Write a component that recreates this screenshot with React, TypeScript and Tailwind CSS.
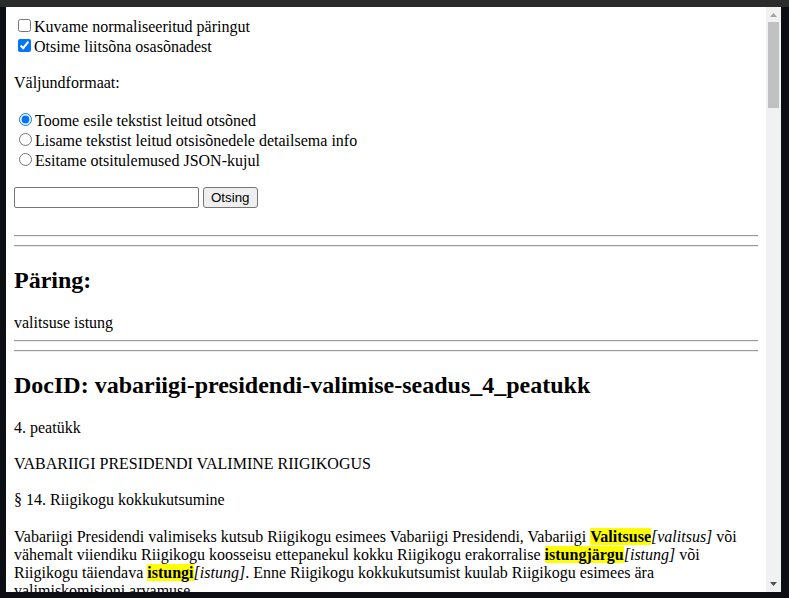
export default function App() {
  return (
    <div className="w-[789px] h-[598px] bg-[#0b0e13] overflow-hidden flex flex-col">
      <div className="h-[7px] bg-[#2b2b2b] shrink-0" />
      <div className="flex h-[585px] shrink-0">
        <div className="w-[6px] shrink-0" />
        <div className="w-[775px] h-[585px] bg-white flex shrink-0">
          <div className="w-[760px] h-full overflow-hidden px-2 pt-[9px] font-['Liberation_Serif',serif] text-[16px] leading-[normal] text-black">
            <form>
              <div>
                <input type="checkbox" className="m-[3px_3px_3px_4px] align-baseline" />
                Kuvame normaliseeritud päringut
              </div>
              <div>
                <input type="checkbox" defaultChecked className="m-[3px_3px_3px_4px] align-baseline" />
                Otsime liitsõna osasõnadest
              </div>
              <p className="mt-[18px] mb-[18px]">Väljundformaat:</p>
              <div>
                <input type="radio" name="fmt" defaultChecked className="m-[3px_3px_0px_5px] align-baseline" />
                Toome esile tekstist leitud otsõned
              </div>
              <div>
                <input type="radio" name="fmt" className="m-[3px_3px_0px_5px] align-baseline" />
                Lisame tekstist leitud otsisõnedele detailsema info
              </div>
              <div>
                <input type="radio" name="fmt" className="m-[3px_3px_0px_5px] align-baseline" />
                Esitame otsitulemused JSON-kujul
              </div>
              <div className="h-[17px]" />
              <div className="flex items-start gap-[4px]">
                <input
                  type="text"
                  className="w-[185px] h-[21px] border border-[#767676] rounded-[2px] bg-white px-[2px] text-[13.33px] font-['Liberation_Sans',sans-serif]"
                />
                <button
                  type="button"
                  className="h-[21px] px-[7px] border border-[#767676] rounded-[3px] bg-[#efefef] text-[13.33px] leading-none font-['Liberation_Sans',sans-serif]"
                >
                  Otsing
                </button>
              </div>
            </form>
            <hr className="mt-[27px] mb-2 h-[2px] border-t border-t-[#9a9a9a] border-b border-b-[#eeeeee]" />
            <hr className="my-2 h-[2px] border-t border-t-[#9a9a9a] border-b border-b-[#eeeeee]" />
            <h2 className="my-[19.92px] text-[24px] font-bold leading-[normal]">Päring:</h2>
            <div>valitsuse istung</div>
            <hr className="my-2 h-[2px] border-t border-t-[#9a9a9a] border-b border-b-[#eeeeee]" />
            <hr className="my-2 h-[2px] border-t border-t-[#9a9a9a] border-b border-b-[#eeeeee]" />
            <h2 className="my-[19.92px] text-[24px] font-bold leading-[normal]">
              DocID: vabariigi-presidendi-valimise-seadus_4_peatukk
            </h2>
            <p className="my-[18.4px]">4. peatükk</p>
            <p className="my-[18.4px]">VABARIIGI PRESIDENDI VALIMINE RIIGIKOGUS</p>
            <p className="my-[18.4px]">§ 14. Riigikogu kokkukutsumine</p>
            <p className="my-[18.4px]">
              Vabariigi Presidendi valimiseks kutsub Riigikogu esimees Vabariigi Presidendi, Vabariigi{" "}
              <b className="bg-[#ffff00]">Valitsuse</b>
              <i>[valitsus]</i> või vähemalt viiendiku Riigikogu koosseisu ettepanekul kokku Riigikogu
              erakorralise <b className="bg-[#ffff00]">istungjärgu</b>
              <i>[istung]</i> või Riigikogu täiendava <b className="bg-[#ffff00]">istungi</b>
              <i>[istung]</i>. Enne Riigikogu kokkukutsumist kuulab Riigikogu esimees ära
              valimiskomisjoni arvamuse.
            </p>
          </div>
          <div className="w-[15px] h-full bg-[#f1f1f1] flex flex-col items-center shrink-0">
            <svg width="15" height="15" viewBox="0 0 15 15" className="shrink-0">
              <path d="M4 10 L7.5 6 L11 10 Z" fill="#a3a3a3" />
            </svg>
            <div className="w-[11px] h-[86px] bg-[#c1c1c1] shrink-0" />
            <div className="flex-1" />
            <svg width="15" height="15" viewBox="0 0 15 15" className="shrink-0">
              <path d="M4 5 L7.5 9 L11 5 Z" fill="#505050" />
            </svg>
          </div>
        </div>
        <div className="flex-1" />
      </div>
    </div>
  );
}
